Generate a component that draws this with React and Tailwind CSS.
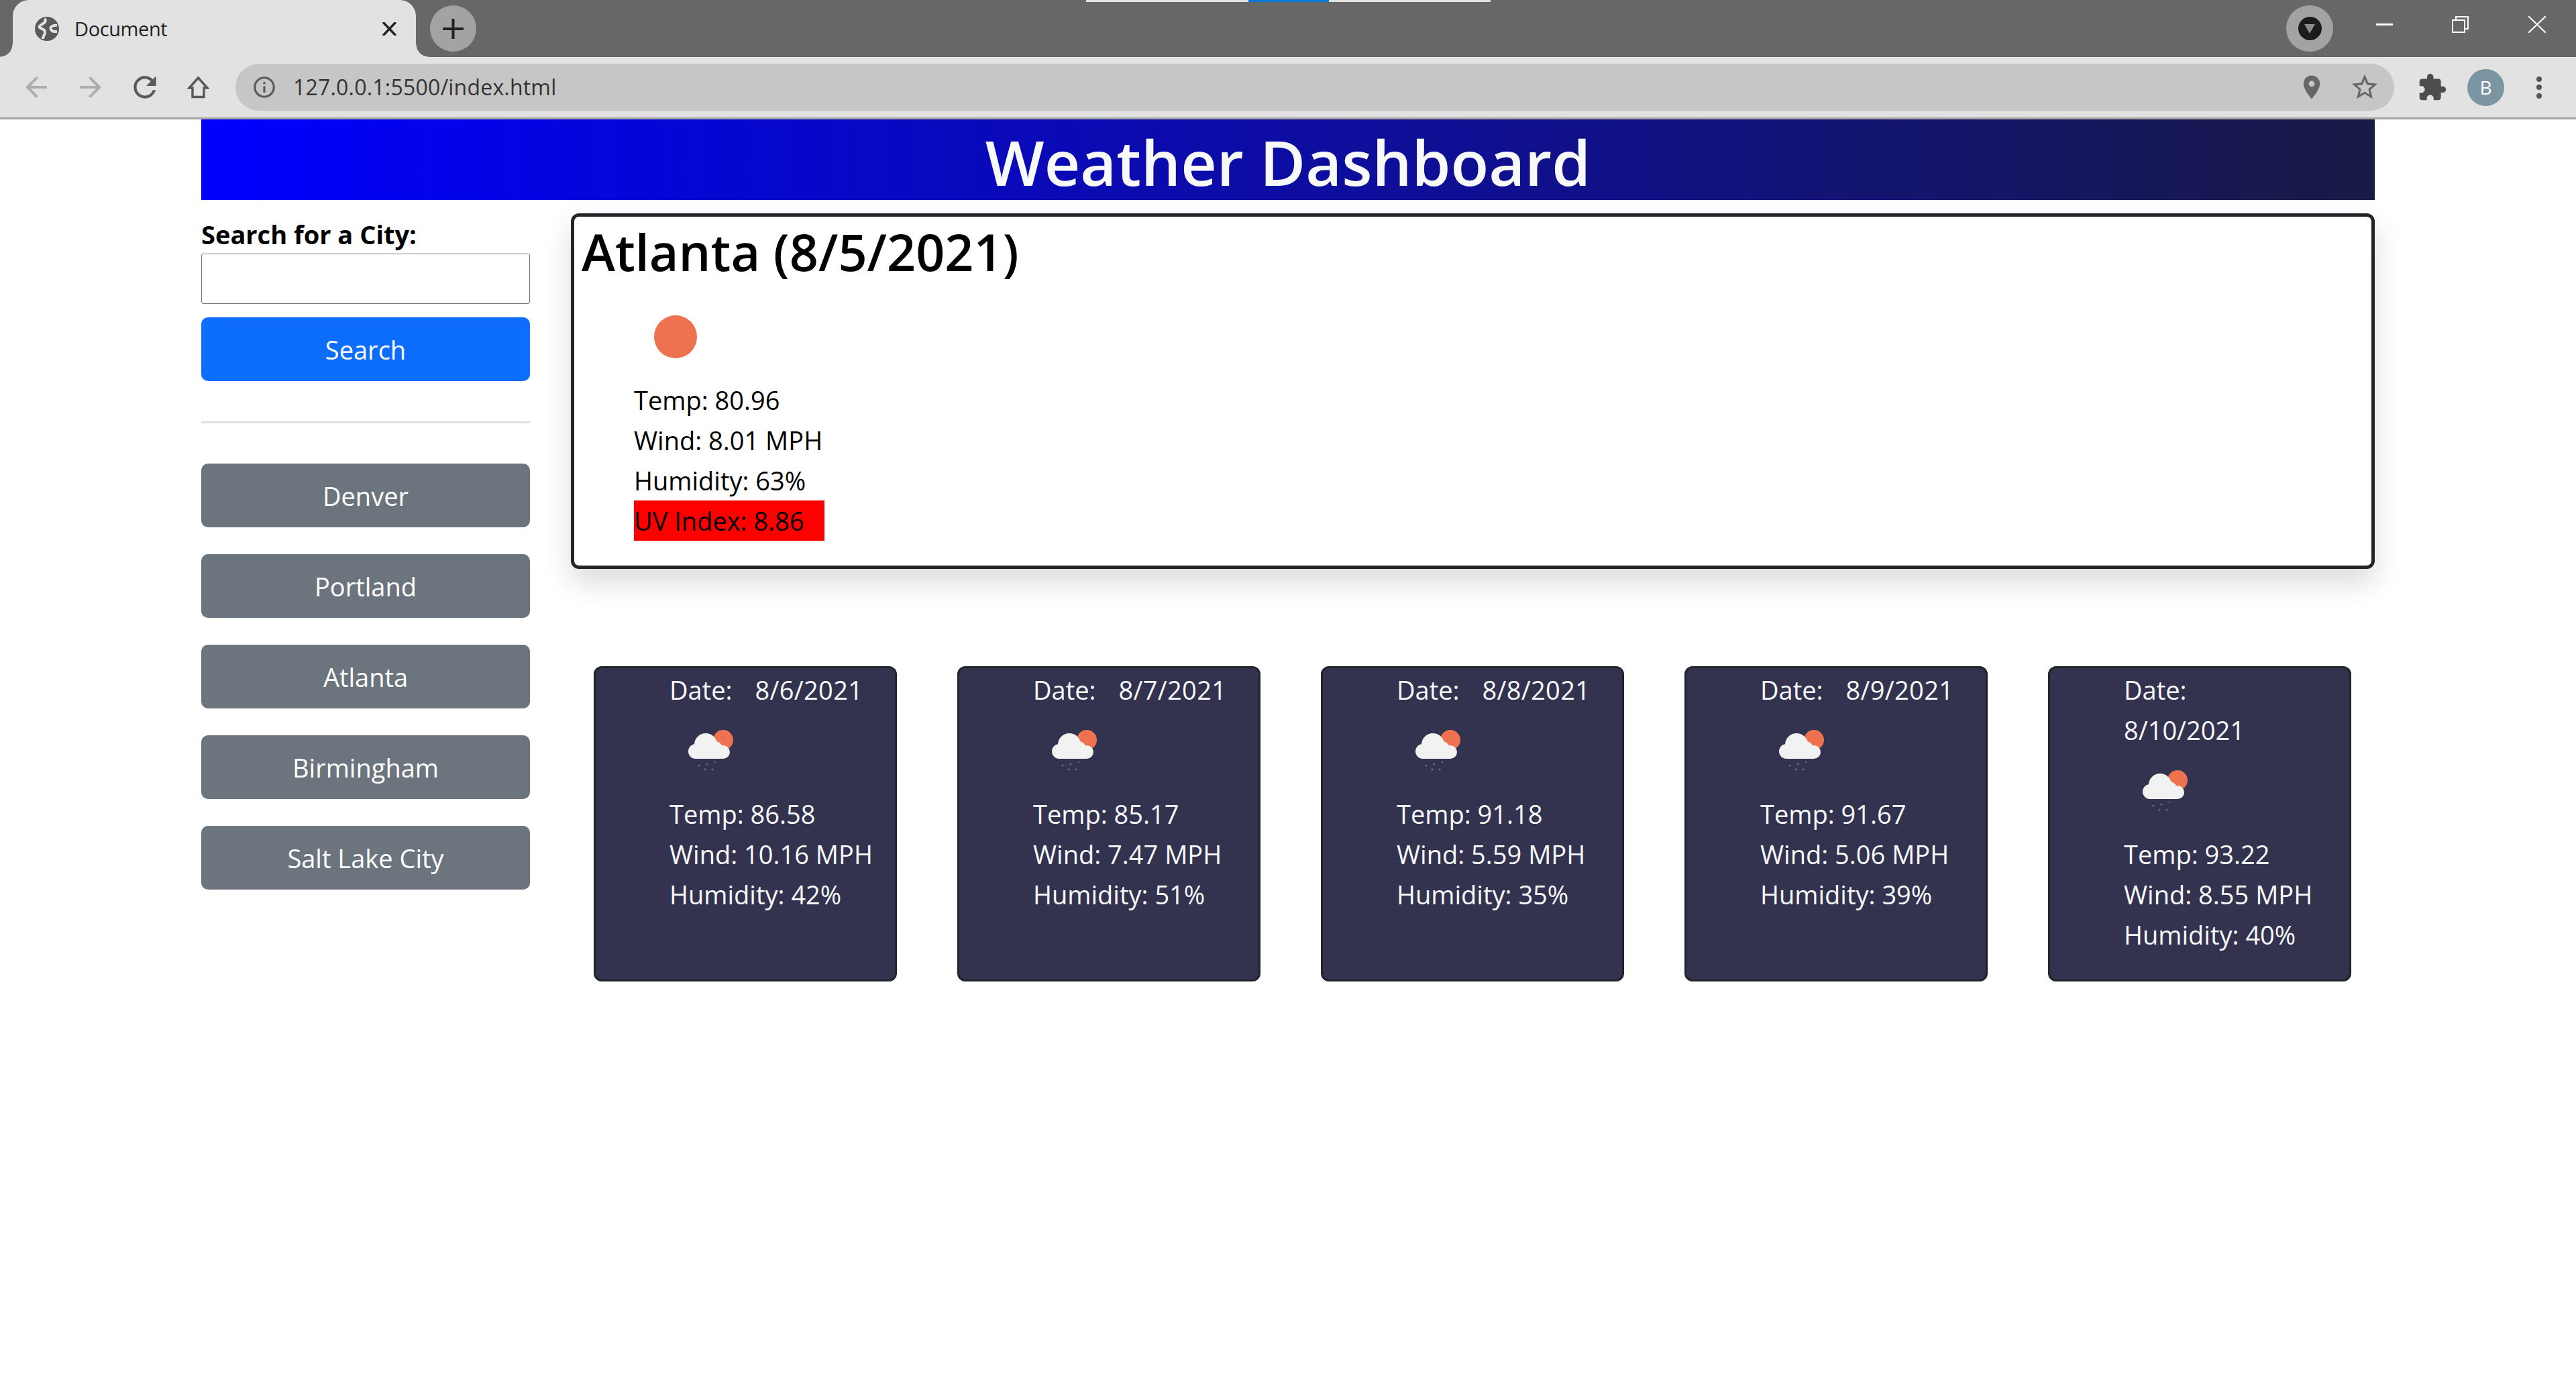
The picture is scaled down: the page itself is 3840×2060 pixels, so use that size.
import React from 'react';
import { MdArrowBack, MdArrowForward, MdRefresh, MdInfoOutline, MdPlace, MdStarBorder, MdExtension } from 'react-icons/md';

const cities = ['Denver', 'Portland', 'Atlanta', 'Birmingham', 'Salt Lake City'];

const forecast = [
  { date: '8/6/2021', temp: '86.58', wind: '10.16', humidity: '42' },
  { date: '8/7/2021', temp: '85.17', wind: '7.47', humidity: '51' },
  { date: '8/8/2021', temp: '91.18', wind: '5.59', humidity: '35' },
  { date: '8/9/2021', temp: '91.67', wind: '5.06', humidity: '39' },
  { date: '8/10/2021', temp: '93.22', wind: '8.55', humidity: '40', wrap: true },
];

function RainIcon() {
  return (
    <svg viewBox="0 0 125 125" className="block w-[125px] h-[125px] blur-[0.5px]">
      <circle cx="80" cy="45" r="15" fill="#ee7150" />
      <g fill="#f2f2f2">
        <circle cx="54" cy="52" r="17" />
        <circle cx="39" cy="62" r="11" />
        <circle cx="68" cy="58" r="11" />
        <circle cx="80" cy="63" r="10" />
        <rect x="39" y="60" width="41" height="13" />
      </g>
      <g fill="#6a6a6a">
        <circle cx="44" cy="83" r="1.6" />
        <circle cx="56" cy="81" r="1.6" />
        <circle cx="68" cy="78" r="1.2" />
        <circle cx="53" cy="89" r="1.6" />
        <circle cx="64" cy="89" r="1.6" />
      </g>
    </svg>
  );
}

function ForecastCard({ day }) {
  return (
    <div className="w-[452px] h-[470px] shrink-0 box-border border-[3px] border-[#212529] rounded-[12px] bg-[#33334f] text-[#f8f9fa] pl-[110px] pt-[2px]">
      {day.wrap ? (
        <>
          <p>Date:</p>
          <p>{day.date}</p>
        </>
      ) : (
        <p className="flex gap-[34px]"><span>Date:</span><span className="tracking-[0.3px]">{day.date}</span></p>
      )}
      <RainIcon />
      <p>Temp: {day.temp}</p>
      <p>Wind: {day.wind} MPH</p>
      <p>Humidity: {day.humidity}%</p>
    </div>
  );
}

function BrowserChrome() {
  return (
    <div className="font-['Open_Sans',sans-serif]">
      {/* Tab strip */}
      <div className="relative h-[85px] bg-[#676767] flex">
        <div className="relative ml-[19px] w-[601px] h-[85px] bg-[#e2e2e2] rounded-t-[24px] flex items-center">
          <div className="absolute left-[-19px] bottom-0 w-[19px] h-[19px] bg-[radial-gradient(circle_at_0_0,#676767_18px,#e2e2e2_19px)]" />
          <div className="absolute right-[-19px] bottom-0 w-[19px] h-[19px] bg-[radial-gradient(circle_at_100%_0,#676767_18px,#e2e2e2_19px)]" />
          <svg viewBox="0 0 36 36" className="ml-[33px] w-[36px] h-[36px]">
            <circle cx="18" cy="18" r="18" fill="#5a5a5a" />
            <path d="M14 3 C20 8 9 11 7 14 C5 18 14 17 15 22 C16 26 12 28 12 33 M33 13 C27 12 22 15 24 19 C26 23 30 22 33 22" fill="none" stroke="#e2e2e2" strokeWidth="4" />
          </svg>
          <span className="ml-[23px] text-[29px] leading-none text-[#222] tracking-[-0.4px]">Document</span>
          <svg viewBox="0 0 21 20" className="ml-auto mr-[29px] w-[21px] h-[20px]">
            <path d="M1 0 L20 20 M20 0 L1 20" stroke="#222" strokeWidth="3.5" />
          </svg>
        </div>
        <div className="ml-[21px] mt-[8px] w-[69px] h-[69px] rounded-full bg-[#a3a3a3] flex items-center justify-center">
          <svg viewBox="0 0 31 30" className="w-[31px] h-[30px]">
            <path d="M15.5 0 V30 M0 15 H31" stroke="#222" strokeWidth="4" />
          </svg>
        </div>
        <div className="absolute top-0 left-[1619px] w-[603px] h-[3px] bg-[#e2e2e2] flex justify-center">
          <div className="w-[120px] h-[3px] bg-[#0a78d4]" />
        </div>
        <div className="ml-auto flex">
          <div className="mt-[8px] w-[70px] h-[69px] rounded-full bg-[#a3a3a3] flex items-center justify-center">
            <div className="w-[35px] h-[35px] rounded-full bg-[#1c1c1c] flex items-center justify-center">
              <svg viewBox="0 0 16 14" className="w-[16px] h-[14px]">
                <path d="M0 0 H16 L8 14 Z" fill="#8c8c8c" />
              </svg>
            </div>
          </div>
          <div className="ml-[64px] mr-[273px] mt-[35px] w-[25px] h-[3px] bg-white" />
        </div>
        <svg viewBox="0 0 25 25" className="absolute left-[3655px] top-[24px] w-[25px] h-[25px]">
          <path d="M6 5 V1 H24 V19 H20 M1 6 H19 V24 H1 Z" fill="none" stroke="#fff" strokeWidth="2" />
        </svg>
        <svg viewBox="0 0 26 25" className="absolute left-[3769px] top-[24px] w-[26px] h-[25px]">
          <path d="M0 0 L26 25 M26 0 L0 25" stroke="#fff" strokeWidth="2" />
        </svg>
      </div>
      {/* Toolbar */}
      <div className="h-[93px] box-border border-b-[3px] border-[#a5a5a5] bg-[#e2e2e2] flex items-center text-[#5a5a5a]">
        <MdArrowBack size={48} className="shrink-0 ml-[30px] text-[#adadad]" />
        <MdArrowForward size={48} className="shrink-0 ml-[33px] text-[#adadad]" />
        <MdRefresh size={50} className="shrink-0 ml-[32px]" />
        <svg viewBox="0 0 33 33" className="shrink-0 ml-[38px] w-[33px] h-[33px]">
          <path d="M16.5 2 L30 17 H25 V30.5 H8 V17 H3 Z" fill="none" stroke="#5a5a5a" strokeWidth="3.5" />
        </svg>
        <div className="shrink-0 ml-[39px] w-[3218px] h-[70px] rounded-full bg-[#c6c6c6] flex items-center">
          <MdInfoOutline size={38} className="ml-[24px]" />
          <span className="ml-[24px] text-[32px] leading-none text-[#333] tracking-[0.2px]">127.0.0.1:5500/index.html</span>
          <MdPlace size={42} className="ml-auto mr-[-2px] text-[#666]" />
          <MdStarBorder size={46} className="ml-[37px] mr-[21px] text-[#666]" />
        </div>
        <MdExtension size={45} className="shrink-0 ml-[34px] text-[#4d4d4d]" />
        <div className="shrink-0 ml-[30px] w-[55px] h-[55px] rounded-full bg-[#7c95a3] text-white text-[28px] leading-none flex items-center justify-center">B</div>
        <div className="shrink-0 ml-[48px] flex flex-col gap-[4.5px]">
          <div className="w-[8px] h-[8px] rounded-full bg-[#555]" />
          <div className="w-[8px] h-[8px] rounded-full bg-[#555]" />
          <div className="w-[8px] h-[8px] rounded-full bg-[#555]" />
        </div>
      </div>
    </div>
  );
}

export default function App() {
  return (
    <div className="min-h-[2060px] bg-white text-black font-['Open_Sans',sans-serif] text-[38px] leading-[60px]">
      <BrowserChrome />
      <div className="w-[3240px] ml-[300px]">
        <header className="h-[120px] box-border pt-[7px] bg-[linear-gradient(to_right,#0000ff,#191a45)] text-center text-[#f8f9fa] text-[93px] font-semibold leading-[113px]">
          Weather Dashboard
        </header>

        <div className="flex">
          {/* Search column */}
          <aside className="w-[490px] pt-[22px]">
            <label className="block h-[58px] pt-[1px] leading-[57px] font-bold text-[38px]">Search for a City:</label>
            <input className="block w-full h-[75px] box-border border border-[#767676] rounded-[3px] bg-white" />
            <button className="block w-full h-[95px] mt-[20px] rounded-[10px] bg-[#0d6efd] text-white">Search</button>
            <hr className="h-[3px] mt-[60px] mb-[60px] border-0 bg-[#e0e0e0]" />
            <div className="flex flex-col gap-[40px]">
              {cities.map(city => (
                <button key={city} className="h-[95px] rounded-[10px] bg-[#6c757d] text-white">{city}</button>
              ))}
            </div>
          </aside>

          <main className="ml-[61px] w-[2689px] pt-[20px]">
            {/* Current weather */}
            <section className="h-[530px] box-border border-[5px] border-[#212529] rounded-[12px] bg-white shadow-[0_20px_40px_rgba(0,0,0,0.15)]">
              <h2 className="pl-[11px] pt-[4px] pb-[18px] text-[75.5px] font-semibold leading-[96px]">Atlanta (8/5/2021)</h2>
              <div className="pl-[89px]">
                <svg viewBox="0 0 125 125" className="block w-[125px] h-[125px] blur-[0.5px]">
                  <circle cx="62" cy="61" r="32" fill="#ee7150" />
                </svg>
                <p>Temp: 80.96</p>
                <p>Wind: 8.01 MPH</p>
                <p>Humidity: 63%</p>
                <p className="w-[284px] bg-[#ff0000]">UV Index: 8.86</p>
              </div>
            </section>

            {/* Five day forecast */}
            <div className="flex gap-[90px] pl-[34px] mt-[145px]">
              {forecast.map(day => (
                <ForecastCard key={day.date} day={day} />
              ))}
            </div>
          </main>
        </div>
      </div>
    </div>
  );
}
